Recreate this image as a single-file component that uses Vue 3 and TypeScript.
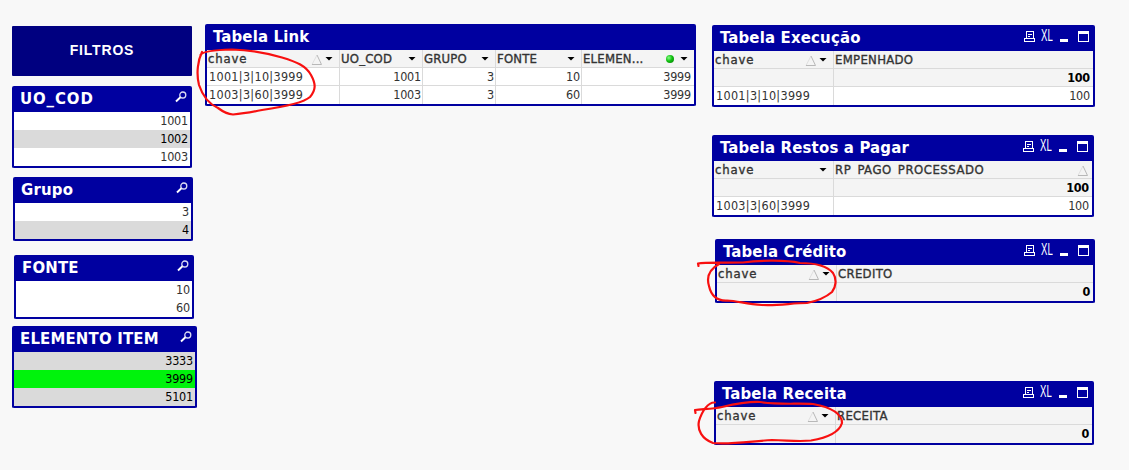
<script setup lang="ts">
interface FilterValue { text: string; state: 'possible' | 'excluded' | 'selected' }
interface FilterBox { id: string; title: string; values: FilterValue[] }
interface Column { label: string; sort?: boolean; menu?: boolean; dot?: boolean }
interface DataTable { id: string; title: string; columns: Column[]; total: string; rows: string[][] }

const filters: FilterBox[] = [
  { id: 'uo', title: 'UO_COD', values: [
    { text: '1001', state: 'possible' }, { text: '1002', state: 'excluded' }, { text: '1003', state: 'possible' }] },
  { id: 'grupo', title: 'Grupo', values: [
    { text: '3', state: 'possible' }, { text: '4', state: 'excluded' }] },
  { id: 'fonte', title: 'FONTE', values: [
    { text: '10', state: 'possible' }, { text: '60', state: 'possible' }] },
  { id: 'elemento', title: 'ELEMENTO ITEM', values: [
    { text: '3333', state: 'excluded' }, { text: '3999', state: 'selected' }, { text: '5101', state: 'excluded' }] },
]

const linkColumns: Column[] = [
  { label: 'chave', sort: true, menu: true },
  { label: 'UO_COD', menu: true },
  { label: 'GRUPO', menu: true },
  { label: 'FONTE', menu: true },
  { label: 'ELEMEN...', menu: true, dot: true },
]
const linkRows: string[][] = [
  ['1001|3|10|3999', '1001', '3', '10', '3999'],
  ['1003|3|60|3999', '1003', '3', '60', '3999'],
]

const tables: DataTable[] = [
  { id: 'execucao', title: 'Tabela Execução', total: '100', rows: [['1001|3|10|3999', '100']],
    columns: [{ label: 'chave', sort: true, menu: true }, { label: 'EMPENHADO' }] },
  { id: 'restos', title: 'Tabela Restos a Pagar', total: '100', rows: [['1003|3|60|3999', '100']],
    columns: [{ label: 'chave', menu: true }, { label: 'RP PAGO PROCESSADO', sort: true }] },
  { id: 'credito', title: 'Tabela Crédito', total: '0', rows: [],
    columns: [{ label: 'chave', sort: true, menu: true }, { label: 'CREDITO' }] },
  { id: 'receita', title: 'Tabela Receita', total: '0', rows: [],
    columns: [{ label: 'chave', sort: true, menu: true }, { label: 'RECEITA' }] },
]
</script>

<template>
  <main class="sheet">
    <aside class="filters">
      <div class="banner">FILTROS</div>
      <section v-for="f in filters" :key="f.id" class="panel" :class="f.id">
        <header class="title">
          <h2>{{ f.title }}</h2>
          <svg class="search" width="12" height="12" viewBox="0 0 12 12">
            <circle cx="7.8" cy="4" r="3" fill="none" stroke="#dcdcf4" stroke-width="1.3" />
            <path d="M5.4 6.3L1 10.5" stroke="#fff" stroke-width="1.9" />
          </svg>
        </header>
        <div v-for="v in f.values" :key="v.text" class="value" :class="v.state">{{ v.text }}</div>
      </section>
    </aside>

    <section class="panel link">
      <header class="title"><h2>Tabela Link</h2></header>
      <div class="row head">
        <div v-for="c in linkColumns" :key="c.label" class="cell">
          <span class="label">{{ c.label }}</span>
          <svg v-if="c.sort" class="sort" width="12" height="12" viewBox="0 0 12 12">
            <path d="M1 10.5L6 1" stroke="#e0e0e0" fill="none" /><path d="M6 1L10.5 10.5H1" stroke="#b8b8b8" fill="none" />
          </svg>
          <i v-if="c.dot" class="dot"></i>
          <i v-if="c.menu" class="menu"></i>
        </div>
      </div>
      <div v-for="r in linkRows" :key="r[0]" class="row">
        <div v-for="(v, i) in r" :key="i" class="cell">{{ v }}</div>
      </div>
    </section>

    <div class="tables">
      <section v-for="t in tables" :key="t.id" class="panel" :class="t.id">
        <header class="title">
          <h2>{{ t.title }}</h2>
          <div class="tools">
            <svg width="11" height="11" viewBox="0 0 11 11" fill="none" stroke="#fff" shape-rendering="crispEdges">
              <path d="M2.5 7V.5H9.5V7M4 3.5H8M4 5.5H6M.5 7.5H10.5V10.5H.5Z" />
            </svg>
            <span class="xl">XL</span>
            <i class="minimize"></i>
            <i class="maximize"></i>
          </div>
        </header>
        <div class="row head">
          <div v-for="c in t.columns" :key="c.label" class="cell">
            <span class="label">{{ c.label }}</span>
            <svg v-if="c.sort" class="sort" width="12" height="12" viewBox="0 0 12 12">
              <path d="M1 10.5L6 1" stroke="#e0e0e0" fill="none" /><path d="M6 1L10.5 10.5H1" stroke="#b8b8b8" fill="none" />
            </svg>
            <i v-if="c.menu" class="menu"></i>
          </div>
        </div>
        <div class="row total"><div class="cell"></div><div class="cell">{{ t.total }}</div></div>
        <div v-for="r in t.rows" :key="r[0]" class="row">
          <div v-for="(v, i) in r" :key="i" class="cell">{{ v }}</div>
        </div>
      </section>
    </div>

    <svg class="ink" width="1129" height="470" viewBox="0 0 1129 470">
      <path d="M200.500 55C202 52 214 50 232 49.500C252 50 270 54 282 57.500C297 62 306 66 311 75C316 84 316 90 310 97C303 103 283 107 262 110C248 113 240 114 233 114.500C226 114 222 111 218 108C209 104 203 97 199 85C196 73 198 60 202 52" />
      <path d="M698.500 266L698 263.500C706 262 722 263 743 262.500C761 260 786 260 800 263C818 263 828 267 833 273C837 279 836 287 832 292C825 298 817 301 807 303C792 303 778 306 762 305C746 304 738 301 727 300.500C716 301 711 295 709 286C706 276 710 269 719 264" />
      <path d="M695.500 413L695 410C703 409 713 409 722 407C735 404 748 401.500 760 402C778 405 797 403 813 404C829 407 842 413 842 423C839 433 826 438 811 440.500C797 442 786 440 772 440C753 441 729 445 713 443C702 439 697 430 699 421C702 411 708 402 715 402.500" />
    </svg>
  </main>
</template>

<style>
body { margin: 0; background: #f8f8f8; }
</style>

<style scoped>
.sheet {
  position: relative;
  display: flex;
  align-items: flex-start;
  width: 1129px;
  height: 470px;
  overflow: hidden;
  box-sizing: border-box;
  background: #f8f8f8;
  color: #333;
  font: 12.5px/18px "DejaVu Sans Condensed", "DejaVu Sans", sans-serif;
  font-stretch: condensed;
  letter-spacing: -0.2px;
}
.sheet * { box-sizing: border-box; }
.filters { width: 205px; padding: 26px 0 0 12px; flex: none; }
.banner {
  width: 180px; height: 50px; margin-bottom: 10px;
  background: #000080; border-radius: 1px; color: #fff;
  font: bold 14px/49px "Liberation Sans", Arial, sans-serif;
  letter-spacing: 0.8px; text-align: center;
}
.panel { background: #fff; border: 2px solid #0000a0; border-top: 0; border-radius: 2px; width: 180px; flex: none; }
.title { height: 26px; display: flex; justify-content: space-between; background: #0000a0; color: #fff; padding-left: 6px; }
h2 {
  margin: 0; font: bold 16.6px/26px "DejaVu Sans Condensed", "DejaVu Sans", sans-serif;
  font-stretch: condensed; letter-spacing: 0.18px; white-space: nowrap;
}
.uo h2 { letter-spacing: 0.9px; }
.search { margin: 5px 3px 0 0; }
.grupo { margin: 9px 0 0 1px; }
.fonte { margin: 14px 0 0 2px; }
.elemento { margin-top: 7px; width: 185px; }
.value { height: 18px; padding-right: 2px; text-align: right; }
.excluded { background: #dadada; color: #000; }
.selected { background: #00f30c; color: #000; }

.link { width: 491px; margin-top: 24px; }
.row { display: grid; height: 18px; border-bottom: 1px solid #dadada; }
.row:last-child { border-bottom: 0; }
.cell { display: flex; align-items: center; justify-content: flex-end; border-right: 1px solid #dadada; padding: 0 1px; line-height: 17px; min-width: 0; white-space: nowrap; }
.row:last-child .cell { padding-bottom: 1px; }
.cell:first-child { justify-content: flex-start; padding-left: 2px; letter-spacing: 0.3px; }
.cell:last-child { border-right: 0; padding-right: 3px; }
.link .row { grid-template-columns: 133px 83px 73px 86px 112px; }
.head, .total { background: #f4f4f4; }
.label { flex: 1; font-size: 13px; letter-spacing: 0.3px; word-spacing: 2px; -webkit-text-stroke: 0.35px #333; }
.restos .cell:last-child .label { letter-spacing: 0.5px; }
.head .cell:first-child { padding-left: 1px; }
.link .label { letter-spacing: 0.2px; }
.head .cell:first-child .label { letter-spacing: 0.8px; }
.menu { width: 8px; height: 4px; background: #000; clip-path: polygon(0 0, 100% 0, 50% 100%); margin-right: 5px; }
.head .cell:last-child { padding-right: 1px; }
.sort { margin: 2px 2px 0 0; flex: none; }
.dot { width: 8px; height: 8px; border-radius: 50%; background: radial-gradient(circle at 35% 35%, #8f8 0, #10c010 45%, #087808 100%); margin-right: 6px; }
.total .cell { font-weight: bold; color: #000; }

.tables { margin-left: 16px; padding-top: 25px; }
.tables .row { grid-template-columns: 120px 1fr; }
.execucao { width: 383px; }
.restos { width: 382px; margin-top: 28px; }
.credito { width: 380px; margin: 22px 0 0 3px; }
.receita { width: 380px; margin: 78px 0 0 2px; }
.tools { display: flex; padding: 6px 4px 0 0; }
.xl { width: 13px; margin: 0 6px; font: 16px/10px "Liberation Sans", Arial, sans-serif; letter-spacing: 0; transform: scaleX(0.6); transform-origin: left; }
.minimize { width: 8px; height: 3px; margin: 8px 10px 0 0; background: #fff; }
.maximize { width: 11px; height: 11px; border: 1px solid #fff; border-top-width: 3px; }
.ink { position: absolute; left: 0; top: 0; pointer-events: none; fill: none; stroke: #f81010; stroke-width: 2.2; stroke-linecap: round; stroke-linejoin: round; }
</style>
